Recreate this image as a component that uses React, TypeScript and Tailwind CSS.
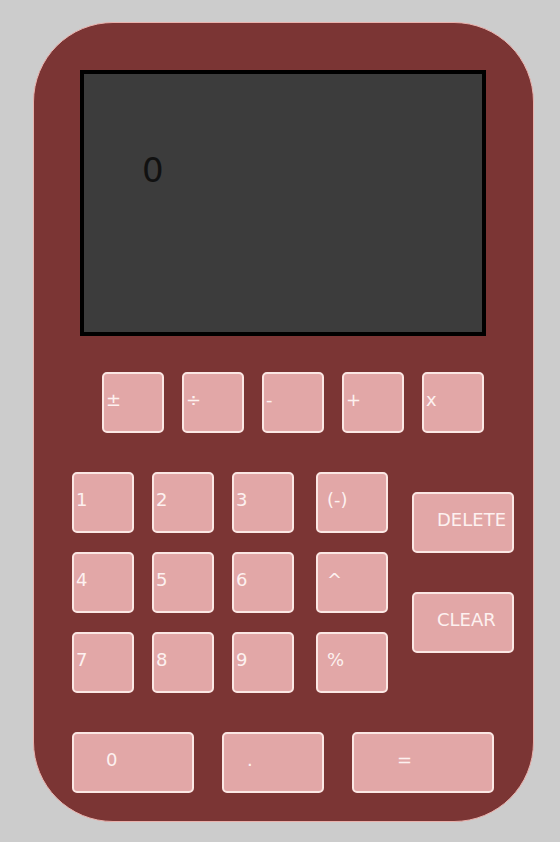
import React from 'react';

const btn =
    'flex items-center border-2 border-[#fbe7e4] rounded-[5px] bg-[#e2a7a7] text-[#fdf1f0] text-[18px] leading-none pb-[6px]';

const ops = ['±', '÷', '-', '+', 'x'];
const nums = ['1', '2', '3', '(-)', '4', '5', '6', '^', '7', '8', '9', '%'];

export default function App() {
    return (
        <div className="min-h-[842px] w-[560px] bg-[#cccccc] pt-[22px] pl-[33px]" style={{ fontFamily: '"DejaVu Sans", sans-serif' }}>
            <div className="w-[501px] h-[800px] rounded-[80px] border border-[#e9b2ad] bg-[#7b3534] pt-[47px]">
                {/* display */}
                <div className="ml-[46px] w-[406px] h-[266px] border-4 border-black bg-[#3c3c3c] pl-[58px] pt-[79px]">
                    <span className="text-[34px] leading-none text-[#111111]">0</span>
                </div>

                {/* operators */}
                <div className="ml-[68px] mt-[36px] flex gap-[18px]">
                    {ops.map((o) => (
                        <div key={o} className={`${btn} w-[62px] h-[61px] pl-[2px] text-[16px]`}>
                            {o}
                        </div>
                    ))}
                </div>

                {/* keypad */}
                <div className="ml-[38px] mt-[39px] flex">
                    <div className="grid grid-cols-[62px_62px_62px_76px] gap-x-[18px] gap-y-[19px]">
                        {nums.map((n, i) => (
                            <div
                                key={n}
                                className={`${btn} h-[61px] ${i % 4 === 3 ? 'ml-[4px] pl-[9px]' : 'pl-[2px]'}`}
                            >
                                {n}
                            </div>
                        ))}
                    </div>
                    <div className="ml-[24px] mt-[20px] flex flex-col gap-[39px]">
                        <div className={`${btn} w-[102px] h-[61px] pl-[23px]`}>DELETE</div>
                        <div className={`${btn} w-[102px] h-[61px] pl-[23px]`}>CLEAR</div>
                    </div>
                </div>

                {/* bottom row */}
                <div className="ml-[38px] mt-[39px] flex gap-[28px]">
                    <div className={`${btn} w-[122px] h-[61px] pl-[32px] text-[16px]`}>0</div>
                    <div className={`${btn} w-[102px] h-[61px] pl-[23px] text-[16px]`}>.</div>
                    <div className={`${btn} w-[142px] h-[61px] pl-[43px] text-[16px]`}>=</div>
                </div>
            </div>
        </div>
    );
}
